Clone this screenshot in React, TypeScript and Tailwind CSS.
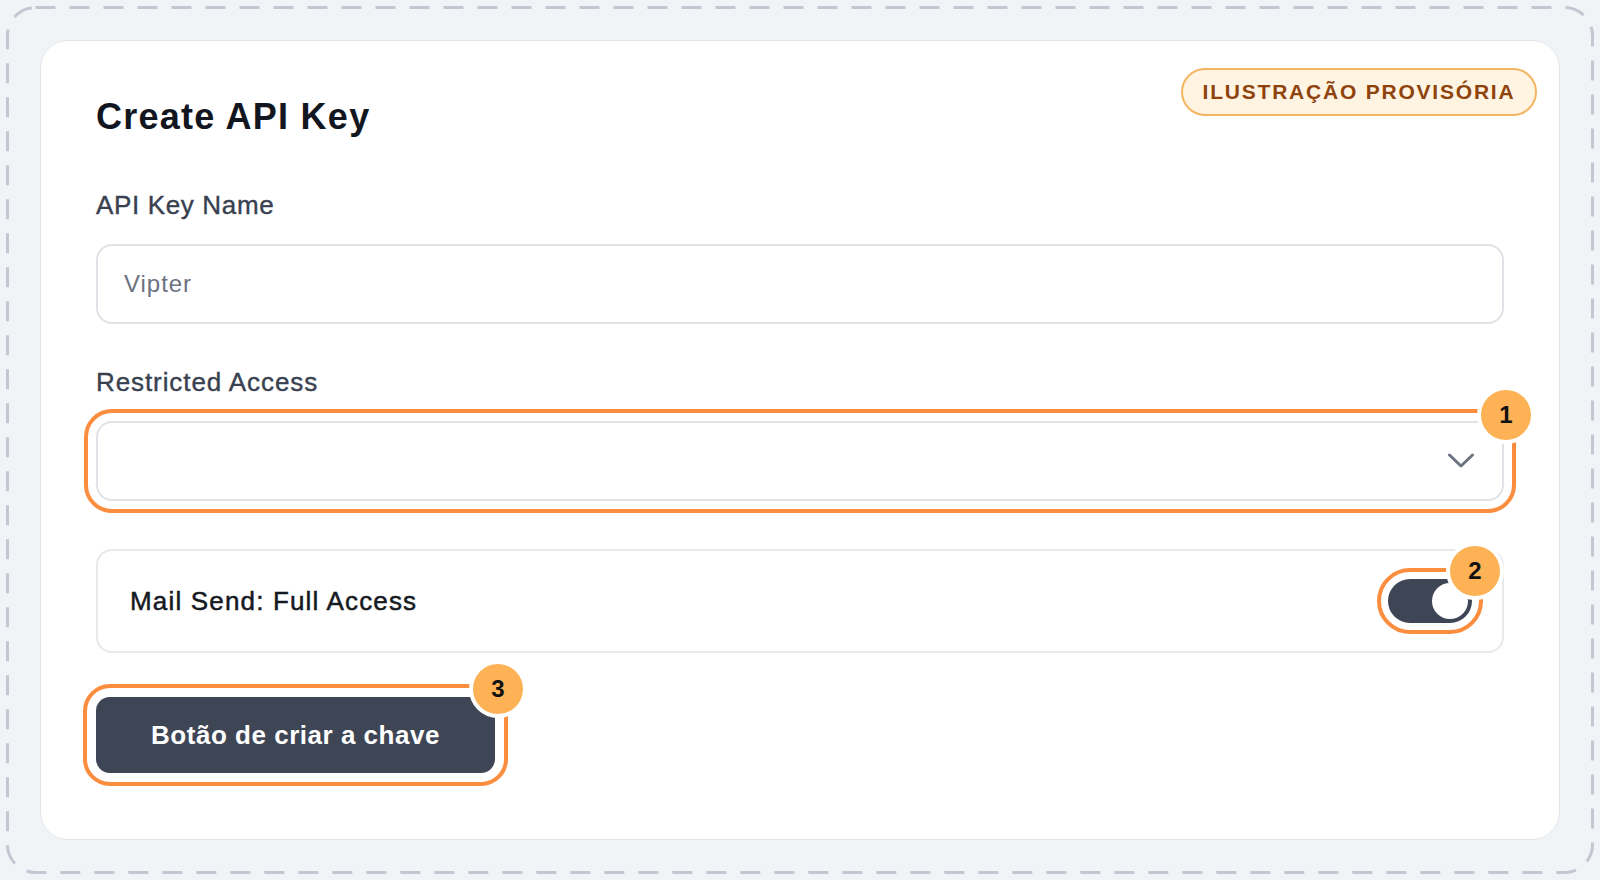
import React from "react";

const Marker = ({ n, className }: { n: string; className: string }) => (
  <span
    className={`absolute flex h-[58px] w-[58px] items-center justify-center rounded-full border-4 border-white bg-[#fcb255] text-[24px] font-bold leading-none tracking-normal text-[#111111] ${className}`}
  >
    {n}
  </span>
);

const App = () => {
  return (
    <div className="h-[880px] w-full bg-[#f1f3f7] p-[6px] font-['Liberation_Sans',Arial,sans-serif]">
      <div className="relative h-full w-full p-[34px]">
        {/* dashed frame */}
        <svg className="absolute inset-0 h-full w-full" aria-hidden>
          <rect
            x="1.5"
            y="1.5"
            rx="28"
            className="h-[calc(100%-3px)] w-[calc(100%-3px)]"
            fill="none"
            stroke="#c2c7d1"
            strokeWidth="3"
            strokeDasharray="20 14"
          />
        </svg>

        <div className="relative h-full rounded-[28px] border border-[#e2e5ea] bg-white px-[55px] pt-[54px]">
          <span className="absolute right-[22px] top-[27px] flex h-[48px] w-[356px] items-center justify-center rounded-full border-2 border-[#f5b462] bg-[#fff3e1] text-[21px] font-bold tracking-[0.085em] text-[#8f430c]">
            ILUSTRAÇÃO PROVISÓRIA
          </span>

          <h1 className="text-[36px] font-bold leading-[43px] tracking-[0.035em] text-[#121620]">Create API Key</h1>

          <label className="mt-[52px] block text-[26px] leading-[30px] tracking-[0.025em] text-[#394150] [-webkit-text-stroke:0.4px_#394150]">
            API Key Name
          </label>
          <div className="mt-[24px] flex h-[80px] items-center rounded-[16px] border-2 border-[#dfe2e6] px-[26px]">
            <span className="text-[24px] tracking-[0.04em] text-[#6b7280]">Vipter</span>
          </div>

          <label className="mt-[43px] block text-[26px] leading-[30px] tracking-[0.035em] text-[#394150] [-webkit-text-stroke:0.4px_#394150]">
            Restricted Access
          </label>
          <div className="relative mt-[24px] flex h-[80px] items-center justify-end rounded-[16px] border-2 border-[#dfe2e6] px-[27px] outline-4 outline-offset-[8px] outline-[#fb8d3e]">
            <svg width="28" height="16" viewBox="0 0 28 16" fill="none">
              <polyline points="2.5,2 14,13 25.5,2" stroke="#6b7280" strokeWidth="3" strokeLinecap="round" strokeLinejoin="round" />
            </svg>
            <Marker n="1" className="-right-[33px] -top-[37px]" />
          </div>

          <div className="mt-[48px] flex h-[104px] items-center justify-between rounded-[16px] border-2 border-[#e6e8ec] pl-[32px] pr-[30px]">
            <span className="text-[26px] tracking-[0.045em] text-[#151922] [-webkit-text-stroke:0.5px_#151922]">
              Mail Send: Full Access
            </span>
            <div className="relative flex h-[44px] w-[84px] items-center justify-end rounded-full bg-[#3e4555] p-[4px] outline-4 outline-offset-[7px] outline-[#fb8d3e]">
              <span className="h-[36px] w-[36px] rounded-full bg-white" />
              <Marker n="2" className="-right-[32px] -top-[37px]" />
            </div>
          </div>

          <button className="relative mt-[44px] flex h-[76px] w-[399px] items-center justify-center rounded-[14px] bg-[#3e4555] text-[26px] font-bold tracking-[0.02em] text-white outline-4 outline-offset-[9px] outline-[#fb8d3e]">
            Botão de criar a chave
            <Marker n="3" className="-right-[32px] -top-[37px]" />
          </button>
        </div>
      </div>
    </div>
  );
};

export default App;
